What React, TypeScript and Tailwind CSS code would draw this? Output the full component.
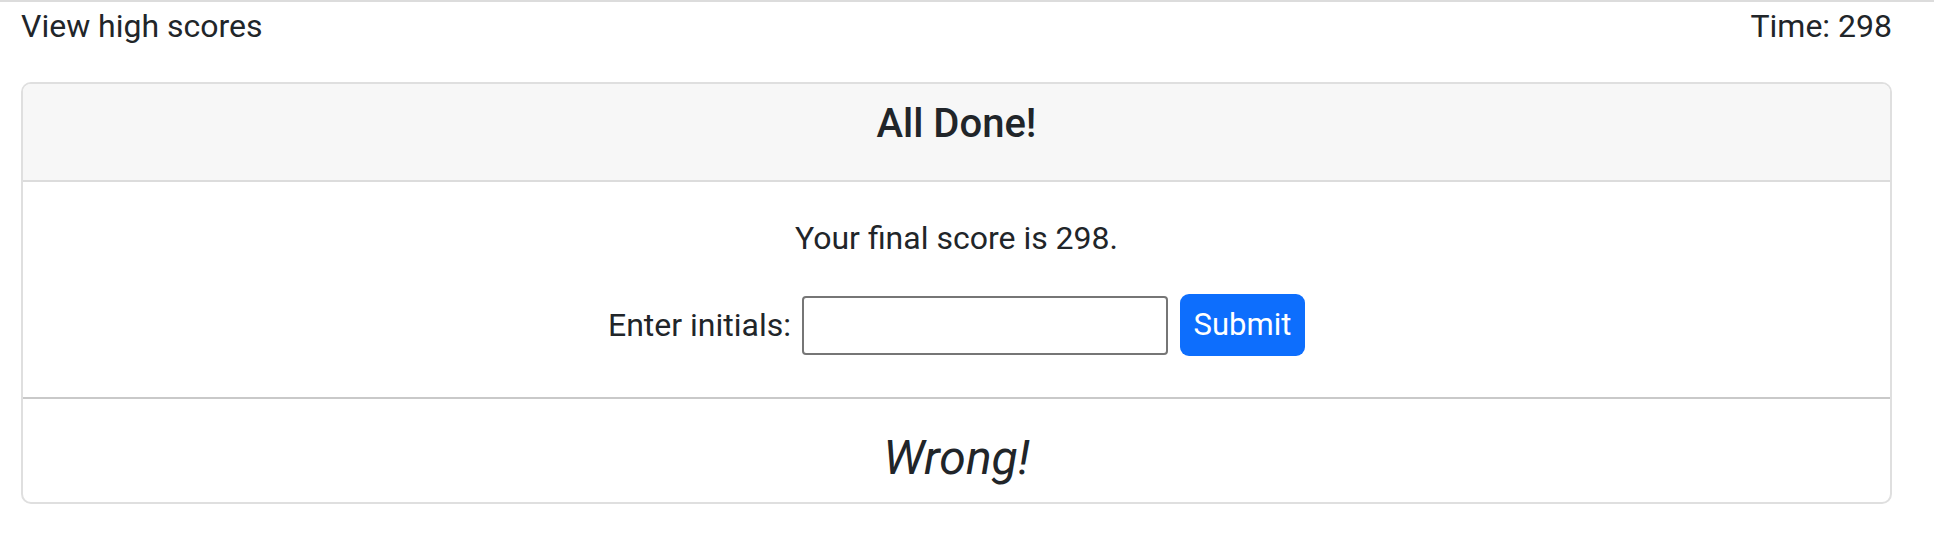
export default function App() {
  return (
    <div
      className="min-h-[534px] bg-white border-t-2 border-[#dcdcdc] pl-[21px] pr-[42px] text-[#212529]"
      style={{ fontFamily: "Roboto, 'Noto Sans', sans-serif" }}
    >
      <header className="flex justify-between text-[32px] leading-[48px]">
        <a className="cursor-pointer">View high scores</a>
        <span>Time: 298</span>
      </header>

      <div className="mt-[32px] border-2 border-[#dfdfdf] rounded-[10px] overflow-hidden">
        <div className="bg-[#f7f7f7] border-b-2 border-[#dcdcdc] px-[32px] pt-[16px] pb-[32px] text-center">
          <h5 className="text-[40px] leading-[48px] font-medium">All Done!</h5>
        </div>

        <div className="px-[32px] pt-[32px] pb-[41px] text-center">
          <p className="text-[32px] leading-[48px] mb-[32px]">
            Your final score is 298.
          </p>
          <form
            className="flex items-center justify-center h-[62px] text-[32px]"
            onSubmit={(e) => e.preventDefault()}
          >
            <label htmlFor="initials" className="leading-[48px] mr-[11px]">
              Enter initials:
            </label>
            <input
              id="initials"
              type="text"
              className="w-[366px] h-[59px] border-2 border-[#767676] rounded-[4px] bg-white"
            />
            <button
              type="submit"
              className="ml-[12px] w-[125px] h-[62px] bg-[#0d6efd] text-white rounded-[9px] text-[31px] leading-[48px]"
            >
              Submit
            </button>
          </form>
        </div>

        <div className="border-t-2 border-[#c9c9c9] pt-[30px] pb-[16px] text-center">
          <p className="text-[48px] leading-[57px] italic">Wrong!</p>
        </div>
      </div>
    </div>
  );
}
